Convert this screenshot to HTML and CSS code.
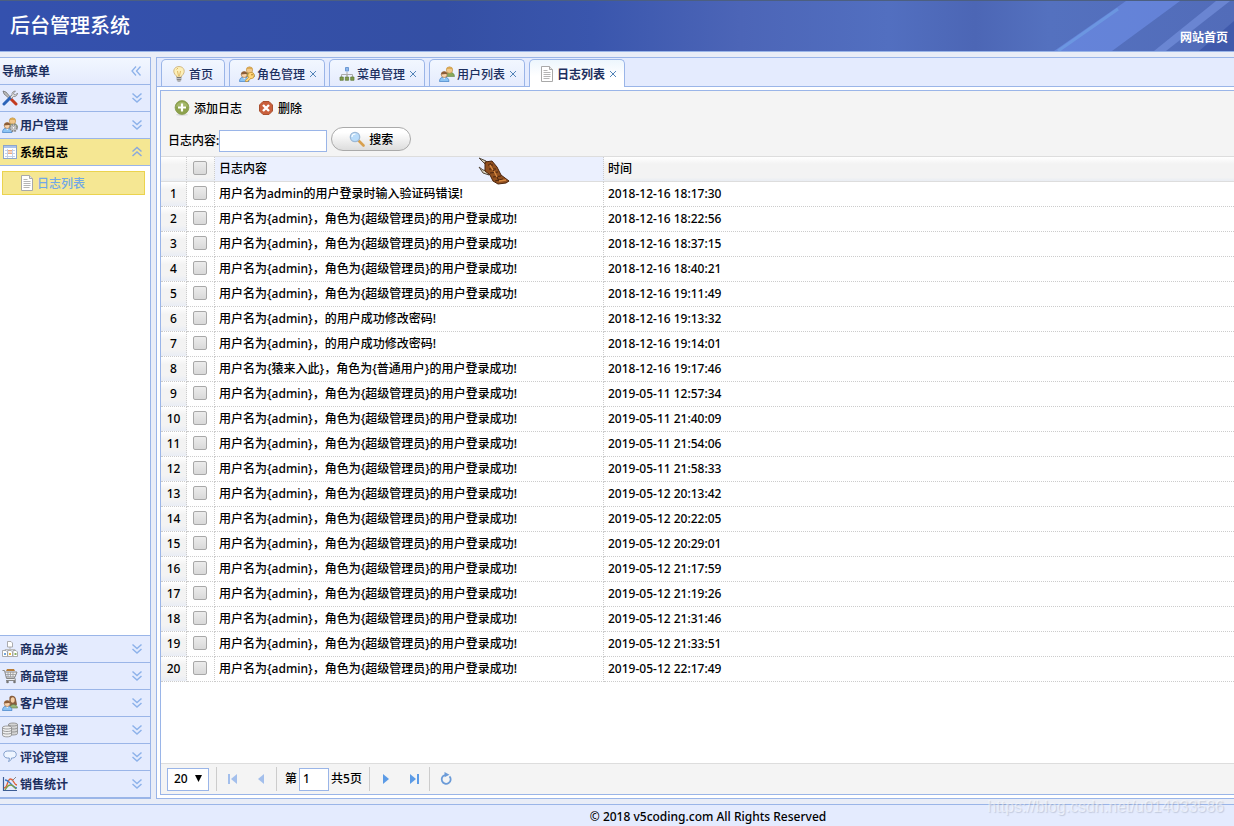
FILE: index.html
```html
<!DOCTYPE html>
<html lang="zh-CN">
<head>
<meta charset="utf-8">
<title>后台管理系统</title>
<link rel="stylesheet" href="styles.css">
</head>
<body>
<svg class="sprite" aria-hidden="true">
  <symbol id="i-down" viewBox="0 0 16 16"><path d="M3.500 3.500l4.500 4 4.500-4M3.500 8l4.500 4 4.500-4" fill="none" stroke="#8db2ea" stroke-width="1.500"/></symbol>
  <symbol id="i-up" viewBox="0 0 16 16"><path d="M3.500 7.500l4.500-4 4.500 4M3.500 12l4.500-4 4.500 4" fill="none" stroke="#8aa9dc" stroke-width="1.500"/></symbol>
  <symbol id="i-left" viewBox="0 0 16 16"><path d="M8 3.500l-4 4.500 4 4.500M12.500 3.500l-4 4.500 4 4.500" fill="none" stroke="#8db2ea" stroke-width="1.300"/></symbol>
  <symbol id="i-tools" viewBox="0 0 16 16"><path d="M1 1l3 1 6 7-1 1-7-6z" fill="#bbb" stroke="#555" stroke-width=".6"/><path d="M9 9l5 5" stroke="#c33b20" stroke-width="3" stroke-linecap="round"/><path d="M2 14l7-7" stroke="#2c64b8" stroke-width="3" stroke-linecap="round"/><path d="M8 7l2-2c-.5-2 1-4 3.500-4l-2 2 .5 1.500 1.500.5 2-2c0 2.500-2 4-4 3.500l-2 2z" fill="#ddd" stroke="#777" stroke-width=".7"/></symbol>
  <symbol id="i-back" viewBox="0 0 16 16"><path d="M6.500 10.500c0-3 1.500-4.500 4-4.500s5 1.500 5 4.500z" fill="#88a95b" stroke="#56733a" stroke-width=".5"/><circle cx="10.500" cy="4" r="3.200" fill="#f1c789" stroke="#b98a45" stroke-width=".6"/><path d="M7.300 3.500C7.500 0 13.500 0 13.700 3.500 12 2.600 9 2.300 7.300 3.500z" fill="#d9a94f"/></symbol>
  <symbol id="i-front" viewBox="0 0 16 16"><path d="M.5 15.500c0-3 1.500-4.500 4.500-4.500s5 1.500 5 4.500z" fill="#8cc4f4" stroke="#3f7fc6" stroke-width=".7"/><path d="M4 11.300l1.200 2 1.300-2" fill="#fff"/><circle cx="5.200" cy="8.500" r="3" fill="#f9d4ae" stroke="#9a6a3d" stroke-width=".6"/><path d="M2.100 8.500C2 4.500 8.500 4.500 8.300 8.500 6.500 7.200 4.500 8.500 2.100 8.500z" fill="#8b5c36"/></symbol>
  <symbol id="i-users" viewBox="0 0 16 16"><use href="#i-back"/><use href="#i-front"/></symbol>
  <symbol id="i-userkey" viewBox="0 0 16 16"><use href="#i-back"/><use href="#i-front"/><circle cx="12" cy="9.500" r="3.200" fill="#ffd67a" stroke="#c08a2c" stroke-width=".7"/><path d="M9.800 11l-3.300 3.300V15.500h2l3.500-3.200" fill="#ffd67a" stroke="#c08a2c" stroke-width=".7"/><circle cx="13" cy="8.700" r=".8" fill="#a97520"/></symbol>
  <symbol id="i-usergear" viewBox="0 0 16 16"><use href="#i-back"/><use href="#i-front"/><circle cx="11.500" cy="10.800" r="3.300" fill="#d6d6d6" stroke="#8a8a8a" stroke-width="2" stroke-dasharray="1.700 .9"/><circle cx="11.500" cy="10.800" r="1.300" fill="#fff" stroke="#888" stroke-width=".6"/></symbol>
  <symbol id="i-customers" viewBox="0 0 16 16"><path d="M7.500 2c1.500-2.500 6.500-1.500 6.500 2.500l1 5c-1 2-6 3-8 1z" fill="#875d3d"/><path d="M7.500 13c0-2 2-3.500 4-3.500s4 1.500 4 3.500z" fill="#9ab77a" stroke="#5e784a" stroke-width=".6"/><ellipse cx="10.700" cy="5" rx="2" ry="2.800" fill="#f6cfa5"/><use href="#i-front"/></symbol>
  <symbol id="i-log" viewBox="0 0 16 16"><rect x="1.500" y="1.500" width="13" height="13" fill="#fff" stroke="#8ba5cc"/><path d="M2 3h12" stroke="#a9c3ec" stroke-width="2"/><path d="M3 6.500h10M3 9.500h10M3 12.500h10M5.500 5v9M10.500 5v9" stroke="#c3d1e8"/><path d="M6 6h4v1.500H6zM6 8.500h4V10H6z" fill="#eda982"/></symbol>
  <symbol id="i-page" viewBox="0 0 16 16"><path d="M2.500.5h8l3 3v12h-11z" fill="#fff" stroke="#a9a9a9"/><path d="M10.500.5v3h3" fill="#e5e5e5" stroke="#a9a9a9"/><path d="M4.500 4.500h4M4.500 6.500h7M4.500 8.500h7M4.500 10.500h7M4.500 12.500h6" stroke="#b5b5b5"/></symbol>
  <symbol id="i-bulb" viewBox="0 0 16 16"><path d="M5.500 10c-5-4-2.500-9.500 2.500-9.500s7.500 5.500 2.500 9.500v1h-5z" fill="#fcefb8" stroke="#cdb27c" stroke-width=".9"/><path d="M6.500 5l1 5M9.500 5l-1 5M5.500 3.500L7 2" fill="none" stroke="#dcb25c" stroke-width=".9"/><path d="M5.700 11h4.600v3l-1 1.500H6.700l-1-1.500z" fill="#777"/><path d="M5.700 12.500h4.600M6 14.300h4" stroke="#ddd" stroke-width=".7"/></symbol>
  <symbol id="i-tree" viewBox="0 0 16 16"><path d="M8 6v4M2.500 11V8.500h11V11M8 8v3" fill="none" stroke="#aaa"/><path d="M6.500 1.500h3v3.500h-3z" fill="#8db8ee" stroke="#6d99d3"/><path d="M1 11h3.300v3.300H1zM6.300 11h3.300v3.300H6.300zM11.700 11H15v3.300h-3.300z" fill="#7f9a4c" stroke="#5d7735" stroke-width=".7"/></symbol>
  <symbol id="i-cat" viewBox="0 0 16 16"><path d="M8 5v4M3 11V8.500h10V11" fill="none" stroke="#bbb"/><path d="M5.500.5h3.500l1.500 1.500v4h-5zM.5 9.500H4L5.500 11v4.500h-5zM5.700 9.500h3.500l1.300 1.500v4.500H5.700zM11 9.500h3l1.500 1.500v4.500H11z" fill="#fff" stroke="#999" stroke-width=".8"/><path d="M2 12h2v2H2z" fill="#70a4dc"/><path d="M7 12h2v2H7z" fill="#e6b841"/><path d="M12.500 12h2v2h-2z" fill="#87af62"/></symbol>
  <symbol id="i-cart" viewBox="0 0 16 16"><path d="M4 3l1-2h7l1 2" fill="#b87d38"/><path d="M.5 2.500h2l2 8h8M3 4h12l-2 5H4M12.500 9l1 3.500H4" fill="#eee" stroke="#888"/><path d="M6 4v5M8.500 4v5M11 4v5M3.500 6.500H14" stroke="#999" stroke-width=".8"/><circle cx="5.500" cy="14" r="1.300" fill="#777"/><circle cx="12.500" cy="14" r="1.300" fill="#777"/></symbol>
  <symbol id="i-coins" viewBox="0 0 16 16"><path d="M6.500 2.500v9c0 2 9 2 9 0v-9c0-2-9-2-9 0z" fill="#d4d4d4" stroke="#888" stroke-width=".8"/><path d="M6.500 2.500c0 2 9 2 9 0M6.500 5.500c0 2 9 2 9 0M6.500 8.500c0 2 9 2 9 0" fill="none" stroke="#888" stroke-width=".8"/><path d="M.5 5.500V13c0 2.500 9 2.500 9 0V5.500c0-2-9-2-9 0z" fill="#f0f0f0" stroke="#888" stroke-width=".8"/><path d="M.5 5.500c0 2 9 2 9 0M.5 8c0 2 9 2 9 0M.5 10.500c0 2 9 2 9 0" fill="none" stroke="#888" stroke-width=".8"/></symbol>
  <symbol id="i-comment" viewBox="0 0 16 16"><path d="M5.500 2h5c5 0 5 7 0 7h-1c0 2-1.500 3-3 3.500.7-1 1-2 .8-3.500H5.500c-5 0-5-7 0-7z" fill="#eef5ff" stroke="#7f9cca"/></symbol>
  <symbol id="i-chart" viewBox="0 0 16 16"><path d="M1.500 1v13.500H15" fill="none" stroke="#3b5b94" stroke-width="1.200"/><path d="M2 12c4 0 3-9 6.500-9s3 6 6.500 6" fill="none" stroke="#df6136" stroke-width="1.300"/><path d="M3 4c5 0 7 8 12 8" fill="none" stroke="#3b77c4" stroke-width="1.300"/><path d="M3 14c3-5 4-5 6-5s3 2 5 4" fill="none" stroke="#7aa044" stroke-width="1.300"/><path d="M10 5l4-4" stroke="#888"/></symbol>
  <symbol id="i-add" viewBox="0 0 16 16"><ellipse cx="8" cy="14.700" rx="6" ry="1.200" fill="#ddd"/><circle cx="8" cy="7.500" r="6.900" fill="#8da24c" stroke="#879a4c" stroke-width=".8"/><path d="M2 6.500c1-6 11-6 12 0z" fill="#b3c47d" opacity=".6"/><path d="M8 3.500v8M4 7.500h8" stroke="#fff" stroke-width="2.200"/></symbol>
  <symbol id="i-del" viewBox="0 0 16 16"><path d="M5 1.500h6L14.500 5v6L11 14.500H5L1.500 11V5z" fill="#c95f3c" stroke="#a9502f"/><path d="M5 5l6 6M11 5l-6 6" stroke="#fff" stroke-width="2.400"/></symbol>
  <symbol id="i-search" viewBox="0 0 16 16"><path d="M9.500 9.500l5 5" stroke="#d8a04e" stroke-width="2.600" stroke-linecap="round"/><circle cx="6" cy="6" r="4.700" fill="#b9dcfa" stroke="#9db9d6" stroke-width="1.300"/><path d="M3 6c0-2 1.500-3 3.500-3" fill="none" stroke="#fff" stroke-width="1.200"/></symbol>
  <symbol id="i-first" viewBox="0 0 16 16"><path d="M4 3v10" stroke="#a3bfec" stroke-width="2"/><path d="M12 3v10L6 8z" fill="#a3bfec"/></symbol>
  <symbol id="i-prev" viewBox="0 0 16 16"><path d="M11 3v10L5 8z" fill="#a3bfec"/></symbol>
  <symbol id="i-next" viewBox="0 0 16 16"><path d="M5 3v10l6-5z" fill="#5c9be6"/></symbol>
  <symbol id="i-last" viewBox="0 0 16 16"><path d="M12 3v10" stroke="#5c9be6" stroke-width="2"/><path d="M4 3v10l6-5z" fill="#5c9be6"/></symbol>
  <symbol id="i-reload" viewBox="0 0 16 16"><path d="M7 4a4.500 4.500 0 1 0 4.500 1.300" fill="none" stroke="#6b9bd8" stroke-width="1.800"/><path d="M6.500 1l5 2.700-5 2.500z" fill="#6b9bd8"/></symbol>
</svg>

<header class="top">
  <svg class="rays" viewBox="0 0 240 50" preserveAspectRatio="none" aria-hidden="true">
    <path d="M60 50L132 0h54L118 50z" fill="#7394ee" opacity=".55"/>
    <path d="M64 50L124 8" stroke="#77b4ee" stroke-width="3" opacity=".4"/>
    <path d="M160 50L222 0h14L172 50z" fill="#829de9" opacity=".5"/>
    <path d="M205 50l35-30v30z" fill="#2d489d" opacity=".5"/>
  </svg>
  <h1 class="brand">后台管理系统</h1>
  <a class="home" href="#">网站首页</a>
</header>

<div class="main">
  <nav class="side">
    <div class="side-title"><span>导航菜单</span><button class="fold" type="button" aria-label="收起"><svg class="ico"><use href="#i-left"/></svg></button></div>
    <button class="acc" type="button"><svg class="ico"><use href="#i-tools"/></svg><span>系统设置</span><svg class="ico"><use href="#i-down"/></svg></button>
    <button class="acc" type="button"><svg class="ico"><use href="#i-usergear"/></svg><span>用户管理</span><svg class="ico"><use href="#i-down"/></svg></button>
    <button class="acc open" type="button"><svg class="ico"><use href="#i-log"/></svg><span>系统日志</span><svg class="ico"><use href="#i-up"/></svg></button>
    <div class="acc-body"><a class="item" href="#"><svg class="ico"><use href="#i-page"/></svg><span>日志列表</span></a></div>
    <button class="acc" type="button"><svg class="ico"><use href="#i-cat"/></svg><span>商品分类</span><svg class="ico"><use href="#i-down"/></svg></button>
    <button class="acc" type="button"><svg class="ico"><use href="#i-cart"/></svg><span>商品管理</span><svg class="ico"><use href="#i-down"/></svg></button>
    <button class="acc" type="button"><svg class="ico"><use href="#i-customers"/></svg><span>客户管理</span><svg class="ico"><use href="#i-down"/></svg></button>
    <button class="acc" type="button"><svg class="ico"><use href="#i-coins"/></svg><span>订单管理</span><svg class="ico"><use href="#i-down"/></svg></button>
    <button class="acc" type="button"><svg class="ico"><use href="#i-comment"/></svg><span>评论管理</span><svg class="ico"><use href="#i-down"/></svg></button>
    <button class="acc" type="button"><svg class="ico"><use href="#i-chart"/></svg><span>销售统计</span><svg class="ico"><use href="#i-down"/></svg></button>
  </nav>

  <main class="work">
    <div class="tabs">
      <div class="tab first"><svg class="ico"><use href="#i-bulb"/></svg><span>首页</span></div>
      <div class="tab"><svg class="ico"><use href="#i-userkey"/></svg><span>角色管理</span><button class="close" type="button" aria-label="关闭"><svg viewBox="0 0 8 8"><path d="M1 1l6 6M7 1L1 7"/></svg></button></div>
      <div class="tab"><svg class="ico"><use href="#i-tree"/></svg><span>菜单管理</span><button class="close" type="button" aria-label="关闭"><svg viewBox="0 0 8 8"><path d="M1 1l6 6M7 1L1 7"/></svg></button></div>
      <div class="tab"><svg class="ico"><use href="#i-users"/></svg><span>用户列表</span><button class="close" type="button" aria-label="关闭"><svg viewBox="0 0 8 8"><path d="M1 1l6 6M7 1L1 7"/></svg></button></div>
      <div class="tab active"><svg class="ico"><use href="#i-page"/></svg><span>日志列表</span><button class="close" type="button" aria-label="关闭"><svg viewBox="0 0 8 8"><path d="M1 1l6 6M7 1L1 7"/></svg></button></div>
    </div>
    <section class="grid">
      <div class="toolbar">
        <div class="tools">
          <button class="tool" type="button"><svg class="ico"><use href="#i-add"/></svg><span>添加日志</span></button>
          <button class="tool" type="button"><svg class="ico"><use href="#i-del"/></svg><span>删除</span></button>
        </div>
        <form class="search">
          <label for="q">日志内容:</label><input id="q" class="box" type="text">
          <button class="go" type="button"><svg class="ico"><use href="#i-search"/></svg><span>搜索</span></button>
        </form>
      </div>
      <div class="rows">
        <table>
          <colgroup><col class="c-num"><col class="c-check"><col class="c-text"><col></colgroup>
          <thead><tr><th></th><th><input type="checkbox" aria-label="全选"></th><th class="hover">日志内容</th><th>时间</th></tr></thead>
          <tbody>
            <tr><td>1</td><td><input type="checkbox" aria-label="1"></td><td>用户名为admin的用户登录时输入验证码错误!</td><td>2018-12-16 18:17:30</td></tr>
            <tr><td>2</td><td><input type="checkbox" aria-label="2"></td><td>用户名为{admin}，角色为{超级管理员}的用户登录成功!</td><td>2018-12-16 18:22:56</td></tr>
            <tr><td>3</td><td><input type="checkbox" aria-label="3"></td><td>用户名为{admin}，角色为{超级管理员}的用户登录成功!</td><td>2018-12-16 18:37:15</td></tr>
            <tr><td>4</td><td><input type="checkbox" aria-label="4"></td><td>用户名为{admin}，角色为{超级管理员}的用户登录成功!</td><td>2018-12-16 18:40:21</td></tr>
            <tr><td>5</td><td><input type="checkbox" aria-label="5"></td><td>用户名为{admin}，角色为{超级管理员}的用户登录成功!</td><td>2018-12-16 19:11:49</td></tr>
            <tr><td>6</td><td><input type="checkbox" aria-label="6"></td><td>用户名为{admin}，的用户成功修改密码!</td><td>2018-12-16 19:13:32</td></tr>
            <tr><td>7</td><td><input type="checkbox" aria-label="7"></td><td>用户名为{admin}，的用户成功修改密码!</td><td>2018-12-16 19:14:01</td></tr>
            <tr><td>8</td><td><input type="checkbox" aria-label="8"></td><td>用户名为{猿来入此}，角色为{普通用户}的用户登录成功!</td><td>2018-12-16 19:17:46</td></tr>
            <tr><td>9</td><td><input type="checkbox" aria-label="9"></td><td>用户名为{admin}，角色为{超级管理员}的用户登录成功!</td><td>2019-05-11 12:57:34</td></tr>
            <tr><td>10</td><td><input type="checkbox" aria-label="10"></td><td>用户名为{admin}，角色为{超级管理员}的用户登录成功!</td><td>2019-05-11 21:40:09</td></tr>
            <tr><td>11</td><td><input type="checkbox" aria-label="11"></td><td>用户名为{admin}，角色为{超级管理员}的用户登录成功!</td><td>2019-05-11 21:54:06</td></tr>
            <tr><td>12</td><td><input type="checkbox" aria-label="12"></td><td>用户名为{admin}，角色为{超级管理员}的用户登录成功!</td><td>2019-05-11 21:58:33</td></tr>
            <tr><td>13</td><td><input type="checkbox" aria-label="13"></td><td>用户名为{admin}，角色为{超级管理员}的用户登录成功!</td><td>2019-05-12 20:13:42</td></tr>
            <tr><td>14</td><td><input type="checkbox" aria-label="14"></td><td>用户名为{admin}，角色为{超级管理员}的用户登录成功!</td><td>2019-05-12 20:22:05</td></tr>
            <tr><td>15</td><td><input type="checkbox" aria-label="15"></td><td>用户名为{admin}，角色为{超级管理员}的用户登录成功!</td><td>2019-05-12 20:29:01</td></tr>
            <tr><td>16</td><td><input type="checkbox" aria-label="16"></td><td>用户名为{admin}，角色为{超级管理员}的用户登录成功!</td><td>2019-05-12 21:17:59</td></tr>
            <tr><td>17</td><td><input type="checkbox" aria-label="17"></td><td>用户名为{admin}，角色为{超级管理员}的用户登录成功!</td><td>2019-05-12 21:19:26</td></tr>
            <tr><td>18</td><td><input type="checkbox" aria-label="18"></td><td>用户名为{admin}，角色为{超级管理员}的用户登录成功!</td><td>2019-05-12 21:31:46</td></tr>
            <tr><td>19</td><td><input type="checkbox" aria-label="19"></td><td>用户名为{admin}，角色为{超级管理员}的用户登录成功!</td><td>2019-05-12 21:33:51</td></tr>
            <tr><td>20</td><td><input type="checkbox" aria-label="20"></td><td>用户名为{admin}，角色为{超级管理员}的用户登录成功!</td><td>2019-05-12 22:17:49</td></tr>
          </tbody>
        </table>
      </div>
      <div class="pager">
        <span class="size"><select aria-label="每页条数"><option>20</option></select><svg viewBox="0 0 7 7" aria-hidden="true"><path d="M0 0h7L3.500 7z"/></svg></span>
        <i class="sep"></i>
        <button type="button" aria-label="首页"><svg class="ico"><use href="#i-first"/></svg></button>
        <button type="button" aria-label="上一页"><svg class="ico"><use href="#i-prev"/></svg></button>
        <i class="sep"></i>
        <span class="goto"><label for="p">第</label><input id="p" type="text" value="1"><span>共5页</span></span>
        <i class="sep"></i>
        <button type="button" aria-label="下一页"><svg class="ico"><use href="#i-next"/></svg></button>
        <button type="button" aria-label="末页"><svg class="ico"><use href="#i-last"/></svg></button>
        <i class="sep"></i>
        <button type="button" aria-label="刷新"><svg class="ico"><use href="#i-reload"/></svg></button>
      </div>
    </section>
  </main>
</div>
<footer class="foot">© 2018 v5coding.com All Rights Reserved</footer>

<svg class="pointer" viewBox="0 0 32 28" aria-hidden="true">
  <path d="M1 1l7 3 3 3-1 3z" fill="#d8d2bd" stroke="#54483a"/>
  <path d="M1 10l4 3 5 1 1 4-6-2z" fill="#d8d2bd" stroke="#54483a"/>
  <path d="M7 5l7-1 5 6 4 8 8 6-3 2-8 1-5-3-3-6-5-4z" fill="#91501f" stroke="#4b240d"/>
  <path d="M10 8l5 0M11 12l7 0M12 16l8-1M15 20l8-1M17 24l8-2M12 6l9 18" stroke="#4b240d" fill="none"/>
  <path d="M12 8l3 5M16 14l3 6M21 24l7-1" stroke="#d78840" stroke-width="1.500" fill="none"/>
</svg>
<div class="mark">https://blog.csdn.net/u014033586</div>
</body>
</html>
```
FILE: styles.css
```css
* { box-sizing: border-box; }
body {
  margin: 0;
  min-height: 100vh;
  display: flex;
  flex-direction: column;
  position: relative;
  overflow: hidden;
  background: #e9edf7;
  color: #000;
  font: 500 12px/16px "Noto Sans", "Noto Sans CJK SC", sans-serif;
}
button, input, select { font: inherit; color: inherit; margin: 0; padding: 0; }
button { border: 0; background: none; display: inline-flex; align-items: center; }
a { text-decoration: none; }
.sprite { position: absolute; width: 0; height: 0; }
.ico { width: 16px; height: 16px; flex: none; display: block; }

.top {
  position: relative;
  height: 52px;
  display: flex;
  justify-content: space-between;
  align-items: center;
  padding: 0 6px 0 10px;
  border-top: 1px solid #4c5f80;
  border-bottom: 1px solid #9ab5e8;
  background: linear-gradient(90deg, #3451ae 0, #344fa4 36%, #3a56ad 48%, #4c65b7 60%, #526fc0 72%, #4c66b5 79%, #5471bf 85%, #526cb9 100%);
  color: #fff;
}
.rays { position: absolute; top: 0; right: 0; width: 240px; height: 50px; }
.brand { margin: 0; font-size: 20px; line-height: 28px; font-weight: 500; }
.home { position: relative; margin-top: 24px; color: #fff; font-weight: 700; }

.main { flex: 1; display: flex; gap: 5px; padding: 5px 0; }
.side {
  width: 151px;
  display: flex;
  flex-direction: column;
  border: solid #9ab5e8;
  border-width: 1px 1px 1px 0;
  background: #fff;
  color: #1c2f5e;
  font-weight: 700;
}
.side-title {
  height: 27px;
  display: flex;
  align-items: center;
  justify-content: space-between;
  padding: 0 6px 0 2px;
  border-bottom: 1px solid #9ab5e8;
  background: linear-gradient(#f2f7ff, #e5ebfd);
}
.acc {
  height: 27px;
  gap: 2px;
  padding: 0 5px 0 2px;
  border-bottom: 1px solid #9ab5e8;
  background: #e4ebfe;
  text-align: left;
}
.acc span { flex: 1; }
.side span, .tab span, .tool span, .go span { padding-top: 2px; }
.acc.open { background: #f5e793; color: #000; }
.acc-body { flex: 1; padding: 5px 5px 0 2px; border-bottom: 1px solid #9ab5e8; }
.item {
  height: 24px;
  display: flex;
  align-items: center;
  gap: 2px;
  padding-left: 16px;
  border: 1px solid #ebd34e;
  background: #f5e793;
  color: #72a8e6;
  font-weight: 500;
}

.work {
  flex: 1;
  min-width: 0;
  display: flex;
  flex-direction: column;
  border: solid #9ab5e8;
  border-width: 1px 0 1px 1px;
  background: #fff;
}
.tabs {
  height: 29px;
  display: flex;
  align-items: flex-end;
  gap: 4px;
  padding-left: 4px;
  border-bottom: 1px solid #9ab5e8;
  background: #e4ebfe;
}
.tab {
  width: 96px;
  height: 27px;
  display: flex;
  align-items: center;
  gap: 2px;
  padding: 2px 0 0 9px;
  border: 1px solid #9ab5e8;
  border-bottom: 0;
  border-radius: 5px 5px 0 0;
  background: linear-gradient(#f2f7ff, #e5ebfd);
  color: #1c2f5e;
}
.tab.first { width: 64px; }
.tab.active { height: 28px; margin-bottom: -1px; padding-bottom: 1px; background: linear-gradient(#edf6fd, #fff 60%); font-weight: 700; }
.close { padding: 2px; }
.close svg { width: 8px; height: 8px; stroke: #5384b8; stroke-width: 1px; fill: none; }

.grid {
  flex: 1;
  display: flex;
  flex-direction: column;
  margin: 3px 0 3px 3px;
  border: solid #9ab5e8;
  border-width: 1px 0 1px 1px;
}
.toolbar { height: 66px; padding: 5px 7px 3px; background: #f4f4f4; border-bottom: 1px solid #ddd; }
.tools { display: flex; height: 24px; padding-left: 6px; gap: 16px; }
.tool { gap: 4px; }
.search { display: flex; align-items: center; height: 34px; padding-top: 4px; }
.search label { margin-top: 4px; }
.box { width: 108px; height: 22px; margin-top: 4px; padding: 0 3px; border: 1px solid #9ab5e8; background: #fff; }
.go {
  width: 80px;
  height: 24px;
  justify-content: center;
  gap: 4px;
  margin-left: 4px;
  border: 1px solid #aaa;
  border-radius: 12px;
  background: linear-gradient(#fff 20%, #eee 60%, #ddd);
}

.rows { flex: 1; background: #fff; }
table { width: 100%; table-layout: fixed; border-collapse: separate; border-spacing: 0; }
.c-num { width: 26px; }
.c-check { width: 28px; }
.c-text { width: 389px; }
th, td {
  height: 25px;
  padding: 0 4px;
  border: 0 dotted #ccc;
  border-width: 0 1px 1px 0;
  text-align: left;
  font-weight: 500;
  white-space: nowrap;
}
th { background: linear-gradient(#fff, #f3f3f3 30%, #f3f3f3 85%, #e9edf3); border-bottom: 1px solid #ddd; }
th.hover { background: #ebf0fe; }
th:last-child, td:last-child { border-right: 0; }
th:first-child, td:first-child { padding: 0; text-align: center; }
th:nth-child(2), td:nth-child(2) { padding: 0 0 2px 6px; }
td:first-child { background: linear-gradient(#fff, #f3f3f3 30%, #f3f3f3 75%, #e9edf5); }
input[type="checkbox"] {
  appearance: none;
  display: block;
  width: 14px;
  height: 14px;
  border: 1px solid #a8a8a8;
  border-radius: 2px;
  background: linear-gradient(#ececec, #d9d9d9);
}

.pager { height: 31px; display: flex; align-items: center; padding: 0 6px; border-top: 1px solid #ddd; background: #f4f4f4; }
.size { position: relative; display: flex; }
.size select { appearance: none; width: 42px; height: 23px; padding: 0 6px; border: 1px solid #9ab5e8; border-radius: 0; background: #fff; }
.size svg { position: absolute; right: 7px; top: 7px; width: 7px; height: 7px; pointer-events: none; }
.sep { width: 1px; height: 24px; margin: 0 8px 0 7px; background: #ccc; }
.pager button { width: 16px; height: 24px; }
.pager button + button { margin-left: 12px; }
.goto { display: flex; align-items: center; gap: 2px; }
.goto input { width: 30px; height: 23px; padding: 0 3px 1px; border: 1px solid #9ab5e8; background: #fff; }

.foot { height: 22px; padding: 4px 0 0 182px; border-top: 1px solid #9ab5e8; background: #e4ebfe; text-align: center; }
.pointer { position: absolute; left: 478px; top: 157px; width: 32px; height: 28px; }
.mark {
  position: absolute;
  right: 10px;
  bottom: 9px;
  font: 400 16px/20px "Liberation Sans", Arial, sans-serif;
  color: rgba(255, 255, 255, .5);
  text-shadow: 1px 1px 1px rgba(120, 130, 150, .3);
}
```
